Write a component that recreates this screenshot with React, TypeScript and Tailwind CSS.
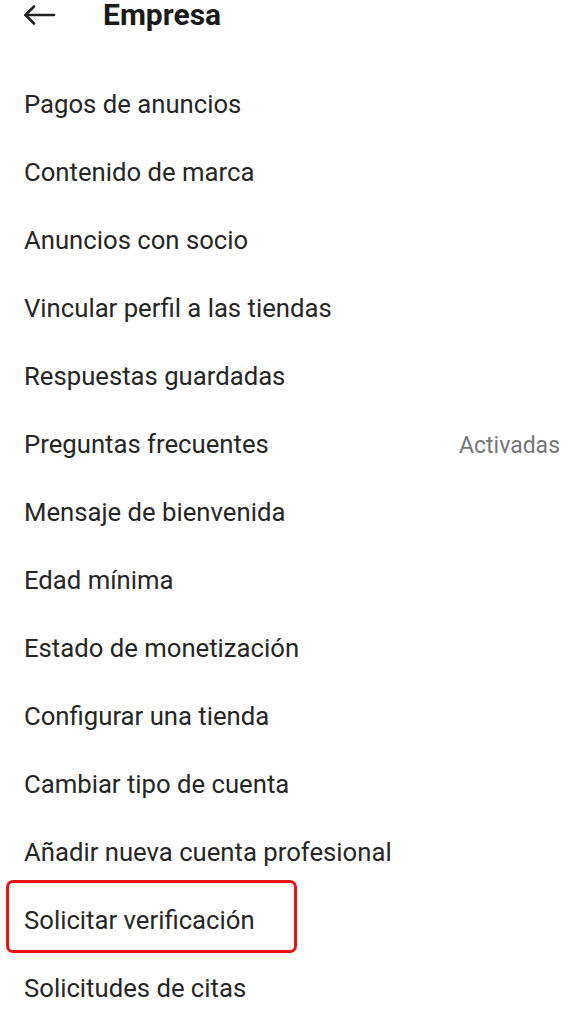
import React from 'react';

const items: { label: string; value?: string; highlight?: boolean }[] = [
  { label: 'Pagos de anuncios' },
  { label: 'Contenido de marca' },
  { label: 'Anuncios con socio' },
  { label: 'Vincular perfil a las tiendas' },
  { label: 'Respuestas guardadas' },
  { label: 'Preguntas frecuentes', value: 'Activadas' },
  { label: 'Mensaje de bienvenida' },
  { label: 'Edad mínima' },
  { label: 'Estado de monetización' },
  { label: 'Configurar una tienda' },
  { label: 'Cambiar tipo de cuenta' },
  { label: 'Añadir nueva cuenta profesional' },
  { label: 'Solicitar verificación', highlight: true },
  { label: 'Solicitudes de citas' },
];

const App = () => {
  return (
    <div className="w-[576px] h-[1024px] bg-white overflow-hidden text-[#262626]" style={{ fontFamily: 'Roboto, "Noto Sans", sans-serif' }}>
      {/* Header */}
      <div className="h-[30px] flex items-center">
        <svg width="33" height="20" viewBox="0 0 33 20" className="ml-[23px]" fill="none" stroke="#222" strokeWidth="2.6" strokeLinecap="round" strokeLinejoin="round">
          <path d="M31 10H2.5" />
          <path d="M11 1.5L2.5 10l8.5 8.5" />
        </svg>
        <h1 className="ml-[47px] text-[30px] font-bold text-[#1a1a1a] leading-none">Empresa</h1>
      </div>

      {/* List */}
      <ul className="mt-[41px]">
        {items.map(item => (
          <li key={item.label} className="relative h-[68px] flex items-center justify-between pl-[24px] pr-[16px]">
            <span className="text-[25.7px] leading-none">{item.label}</span>
            {item.value && <span className="text-[23px] text-[#767676] leading-none">{item.value}</span>}
            {item.highlight && (
              <div className="absolute left-[6px] top-[-7px] w-[291px] h-[73px] border-[3px] border-[#ee1111] rounded-[7px]" />
            )}
          </li>
        ))}
      </ul>
    </div>
  );
};

export default App;
